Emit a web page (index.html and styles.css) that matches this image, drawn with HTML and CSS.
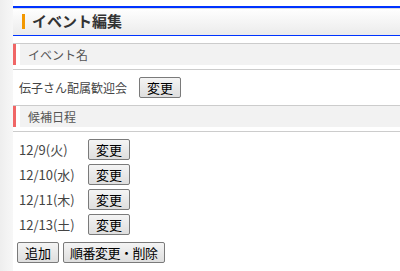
FILE: index.html
```html
<!DOCTYPE html>
<html lang="ja">
<head>
  <meta charset="UTF-8">
  <title>イベント編集</title>
  <link rel="stylesheet" href="styles.css">
</head>
<body>
  <div class="page">
    <div class="side"></div>

    <div class="main">
      <div class="title-bar">
        <h1 class="title">イベント編集</h1>
      </div>

      <div class="section">
        <h2 class="section-head"><span>イベント名</span></h2>
        <div class="section-body">
          <div class="name-row">
            <span class="name">伝子さん配属歓迎会</span>
            <button class="btn">変更</button>
          </div>
        </div>
      </div>

      <div class="section">
        <h2 class="section-head"><span>候補日程</span></h2>
        <div class="section-body">
          <div class="dates">
            <span class="date">12/9(火)</span>
            <button class="btn">変更</button>
            <span class="date">12/10(水)</span>
            <button class="btn">変更</button>
            <span class="date">12/11(木)</span>
            <button class="btn">変更</button>
            <span class="date">12/13(土)</span>
            <button class="btn">変更</button>
          </div>
          <div class="actions">
            <button class="btn">追加</button>
            <button class="btn btn-tight">順番変更・削除</button>
          </div>
        </div>
      </div>
    </div>
  </div>
</body>
</html>
```

FILE: styles.css
```css
* { margin: 0; padding: 0; box-sizing: border-box; }

body {
  font-family: "Noto Sans CJK JP", "Noto Sans", sans-serif;
  background: #ffffff;
  color: #333;
  height: 100vh;
  overflow: hidden;
}

.page {
  display: flex;
  height: 100%;
}

.side {
  width: 13px;
  flex-shrink: 0;
  background: linear-gradient(to right, #eeeeee, #f7f7f7);
}

.main {
  flex: 1;
  padding-top: 6px;
}

.title-bar {
  border-top: 2px solid #0033ff;
  border-bottom: 1px solid #0033ff;
  box-shadow: inset 0 1px 0 #dddddd;
  background: linear-gradient(#ffffff, #ebebeb);
  height: 30px;
  padding: 5px 0 0 9px;
}

.title {
  display: flex;
  align-items: center;
  gap: 7px;
  height: 16px;
  font-size: 15px;
  font-weight: bold;
  line-height: 16px;
  color: #333;
}

.title::before {
  content: "";
  width: 3px;
  height: 15px;
  background: #f39800;
}

.section {
  margin-top: 7px;
}

.section-head {
  border-top: 1px solid #cccccc;
  border-bottom: 1px solid #cccccc;
  padding-bottom: 4px;
  display: flex;
  font-size: 12px;
  font-weight: normal;
  color: #555;
}

.section-head::before {
  content: "";
  width: 3px;
  background: #f06666;
  margin-right: 4px;
}

.section-head span {
  flex: 1;
  background: #f2f2f2;
  height: 21px;
  line-height: 21px;
  padding-left: 8px;
}

.section-body {
  padding: 7px 0 0 4px;
}

.name-row {
  display: flex;
  align-items: center;
  gap: 12px;
  padding-left: 2px;
  font-size: 12px;
  color: #444;
}

.dates {
  display: grid;
  grid-template-columns: 69px auto;
  justify-content: start;
  align-items: center;
  row-gap: 4px;
  padding-left: 2px;
  font-size: 13px;
  color: #444;
}

.actions {
  display: flex;
  gap: 4px;
  margin-top: 7px;
}

.btn {
  font-family: "Noto Sans CJK JP", "Noto Sans", sans-serif;
  font-size: 13px;
  line-height: 17px;
  height: 21px;
  padding: 1px 7px;
  color: #000;
  background: linear-gradient(#f4f4f4, #dedede);
  border: 1px solid #7a7a7a;
  border-radius: 2px;
}

.btn-tight {
  letter-spacing: -0.5px;
  padding: 1px 6px;
}
```
